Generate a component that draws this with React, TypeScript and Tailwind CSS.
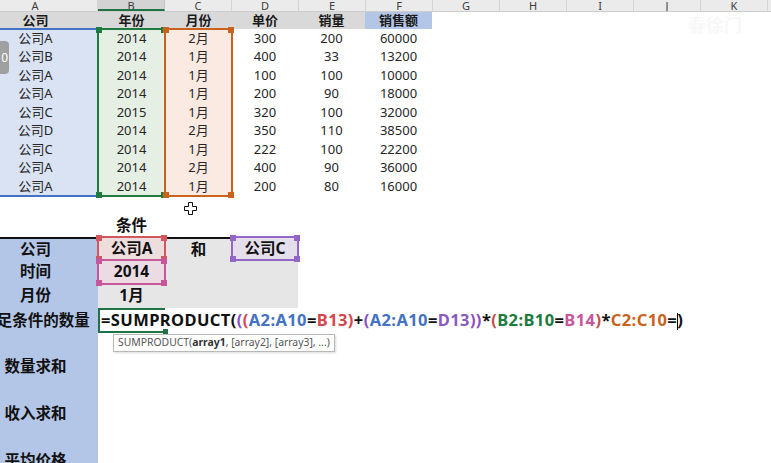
import React from "react";

const letters = ["A", "B", "C", "D", "E", "F", "G", "H", "I", "J", "K", "L"];

const data = [
  ["公司A", "2014", "2月", "300", "200", "60000"],
  ["公司B", "2014", "1月", "400", "33", "13200"],
  ["公司A", "2014", "1月", "100", "100", "10000"],
  ["公司A", "2014", "1月", "200", "90", "18000"],
  ["公司C", "2015", "1月", "320", "100", "32000"],
  ["公司D", "2014", "2月", "350", "110", "38500"],
  ["公司C", "2014", "1月", "222", "100", "22200"],
  ["公司A", "2014", "2月", "400", "90", "36000"],
  ["公司A", "2014", "1月", "200", "80", "16000"],
];

// small handle squares at the corners of a highlighted range
function Corners({ color }: { color: string }) {
  return (
    <>
      <span className={`absolute -left-[3px] -top-[3px] w-[6px] h-[6px] ${color}`} />
      <span className={`absolute -right-[3px] -top-[3px] w-[6px] h-[6px] ${color}`} />
      <span className={`absolute -left-[3px] -bottom-[3px] w-[6px] h-[6px] ${color}`} />
      <span className={`absolute -right-[3px] -bottom-[3px] w-[6px] h-[6px] ${color}`} />
    </>
  );
}

function DataColumn({ idx, className, frame }: { idx: number; className: string; frame?: React.ReactNode }) {
  return (
    <div className={`relative flex flex-col ${className}`}>
      {data.map((r, i) => (
        <div key={i} className="h-[18.5px] flex items-center justify-center">
          {r[idx]}
        </div>
      ))}
      {frame}
    </div>
  );
}

export default function App() {
  return (
    <div className="relative w-[771px] h-[463px] overflow-hidden bg-white text-[#262626] font-['Noto_Sans','Noto_Sans_CJK_SC',sans-serif]">
      {/* column headers */}
      <div className="flex h-[12px] bg-[#ebebeb] border-b border-[#cdcdcd] text-[11px] leading-[11px] text-[#3c3c3c]">
        {letters.map((l, i) => (
          <div
            key={l}
            className={
              i === 0
                ? "-ml-[27px] w-[125px] shrink-0 flex items-start justify-center border-r border-[#d4d4d4] overflow-hidden"
                : i === 1
                ? "w-[67px] shrink-0 flex items-start justify-center bg-[#d3d3d3] border-r border-[#c4c4c4] border-b-2 border-b-[#217346] overflow-hidden"
                : "w-[67px] shrink-0 flex items-start justify-center border-r border-[#d4d4d4] overflow-hidden"
            }
          >
            <span>{l}</span>
          </div>
        ))}
      </div>

      {/* row 1 headers */}
      <div className="flex h-[17px] text-[13px] font-bold text-[#1a1a1a]">
        <div className="-ml-[27px] w-[125px] shrink-0 bg-[#d9d9d9] flex items-center justify-center">公司</div>
        <div className="w-[67px] shrink-0 bg-[#d9d9d9] flex items-center justify-center">年份</div>
        <div className="w-[67px] shrink-0 bg-[#d9d9d9] flex items-center justify-center">月份</div>
        <div className="w-[66px] shrink-0 bg-[#d9d9d9] flex items-center justify-center">单价</div>
        <div className="w-[67px] shrink-0 bg-[#d9d9d9] flex items-center justify-center">销量</div>
        <div className="w-[67px] shrink-0 bg-[#b4c6e7] flex items-center justify-center">销售额</div>
      </div>

      {/* data rows 2-10 */}
      <div className="flex text-[13px]">
        <DataColumn
          idx={0}
          className="-ml-[27px] w-[125px] shrink-0 bg-[#dae3f3]"
          frame={<div className="absolute inset-x-0 -top-[1px] -bottom-[1px] border-y-2 border-[#4472c4]" />}
        />
        <DataColumn
          idx={1}
          className="w-[67px] shrink-0 bg-[#e6efe4]"
          frame={
            <div className="absolute -inset-[1px] border-2 border-[#1e7b3e]">
              <Corners color="bg-[#1e7b3e]" />
            </div>
          }
        />
        <DataColumn
          idx={2}
          className="w-[67px] shrink-0 bg-[#fbeae2]"
          frame={
            <div className="absolute -inset-[1px] border-2 border-[#c9621c]">
              <Corners color="bg-[#c9621c]" />
            </div>
          }
        />
        <DataColumn idx={3} className="w-[66px] shrink-0" />
        <DataColumn idx={4} className="w-[67px] shrink-0" />
        <DataColumn idx={5} className="w-[67px] shrink-0" />
      </div>

      {/* row 11 (empty) + row 12 */}
      <div className="h-[18.5px]" />
      <div className="flex h-[23px] text-[15.5px] font-bold text-[#111]">
        <div className="-ml-[27px] w-[125px] shrink-0" />
        <div className="w-[67px] shrink-0 flex items-center justify-center">条件</div>
      </div>

      {/* conditions rows 13-15 */}
      <div className="flex text-[15.5px] font-bold text-[#111]">
        <div className="-ml-[27px] w-[125px] shrink-0 bg-[#b4c6e7] border-t-2 border-[#111] flex flex-col">
          <div className="h-[21px] flex items-center justify-center">公司</div>
          <div className="h-[24px] flex items-center justify-center">时间</div>
          <div className="h-[24px] flex items-center justify-center">月份</div>
        </div>
        <div className="w-[200px] shrink-0 bg-[#e7e6e6] grid grid-cols-[67px_67px_66px] grid-rows-[23px_24px_24px]">
          <div className="relative flex items-center justify-center bg-[#eedddd]">
            公司A
            <div className="absolute -inset-[1px] border-2 border-[#d4575f]">
              <Corners color="bg-[#d4575f]" />
            </div>
          </div>
          <div className="flex items-center justify-center border-t-2 border-[#111]">和</div>
          <div className="relative flex items-center justify-center bg-[#e4dfea]">
            公司C
            <div className="absolute -inset-[1px] border-2 border-[#9466c8]">
              <Corners color="bg-[#9466c8]" />
            </div>
          </div>
          <div className="relative flex items-center justify-center bg-[#ebdbe2]">
            2014
            <div className="absolute -inset-[1px] border-2 border-[#c8569a]">
              <Corners color="bg-[#c8569a]" />
            </div>
          </div>
          <div />
          <div />
          <div className="flex items-center justify-center">1月</div>
          <div />
          <div />
        </div>
      </div>

      {/* row 16: formula being edited */}
      <div className="flex h-[25px] text-[15.5px] font-bold text-[#111]">
        <div className="-ml-[27px] w-[125px] shrink-0 bg-[#b4c6e7] flex items-center justify-center whitespace-nowrap">
          满足条件的数量
        </div>
        <div className="relative flex-1 flex items-center pl-[3px] whitespace-nowrap text-[16.5px] tracking-[0.4px]">
          <div className="absolute left-0 top-0 bottom-0 w-[67px] border-2 border-r-0 border-[#217346]">
            <span className="absolute -right-[3px] -bottom-[3px] w-[5px] h-[5px] bg-[#217346]" />
          </div>
          <span className="relative">
            <span className="text-[#111]">=SUMPRODUCT(</span>
            <span className="text-[#8a4fbf]">(</span>
            <span className="text-[#d6454b]">(</span>
            <span className="text-[#4472c4]">A2:A10</span>
            <span>=</span>
            <span className="text-[#d6454b]">B13</span>
            <span className="text-[#d6454b]">)</span>
            <span>+</span>
            <span className="text-[#8a4fbf]">(</span>
            <span className="text-[#4472c4]">A2:A10</span>
            <span>=</span>
            <span className="text-[#8a5ac2]">D13</span>
            <span className="text-[#8a4fbf]">))</span>
            <span>*</span>
            <span className="text-[#c0504d]">(</span>
            <span className="text-[#1e7b3e]">B2:B10</span>
            <span>=</span>
            <span className="text-[#c8569a]">B14</span>
            <span className="text-[#c0504d]">)</span>
            <span>*</span>
            <span className="text-[#c9621c]">C2:C10</span>
            <span>=</span>
            <span className="inline-block w-[1px] h-[17px] bg-black align-middle -mr-[1px]" />
            <span>)</span>
          </span>
        </div>
      </div>

      {/* rows 17-19 */}
      <div className="flex text-[15.5px] font-bold text-[#111]">
        <div className="-ml-[27px] w-[125px] shrink-0 bg-[#b4c6e7] flex flex-col">
          <div className="h-[47px] flex items-end justify-center pb-[2px]">数量求和</div>
          <div className="h-[47px] flex items-end justify-center pb-[2px]">收入求和</div>
          <div className="h-[47px] flex items-end justify-center pb-[2px]">平均价格</div>
        </div>
      </div>

      {/* function tooltip */}
      <div className="absolute left-[113px] top-[334px] h-[18px] px-[4px] flex items-center border border-[#b8b8b8] bg-white shadow-[1px_1px_2px_rgba(0,0,0,0.15)] text-[10.4px] text-[#555] whitespace-nowrap">
        SUMPRODUCT(<b className="text-[#333]">array1</b>, [array2], [array3], ...)
      </div>

      {/* side panel tab */}
      <div className="absolute -left-[4px] top-[41px] w-[13px] h-[33px] rounded-[4px] bg-[#a0a0a0] flex items-center justify-end pr-[1px] text-white text-[12px]">
        0
      </div>

      {/* mouse cursor */}
      <svg className="absolute left-[184px] top-[202px]" width="13" height="13" viewBox="0 0 13 13">
        <path d="M4.5 0.5h4v4h4v4h-4v4h-4v-4h-4v-4h4z" fill="#fff" stroke="#111" strokeWidth="1" />
      </svg>

      {/* faint watermark */}
      <div className="absolute left-[688px] top-[12px] text-[18px] font-bold text-[#f8f8f8] whitespace-nowrap">
        春徐门
      </div>
    </div>
  );
}
